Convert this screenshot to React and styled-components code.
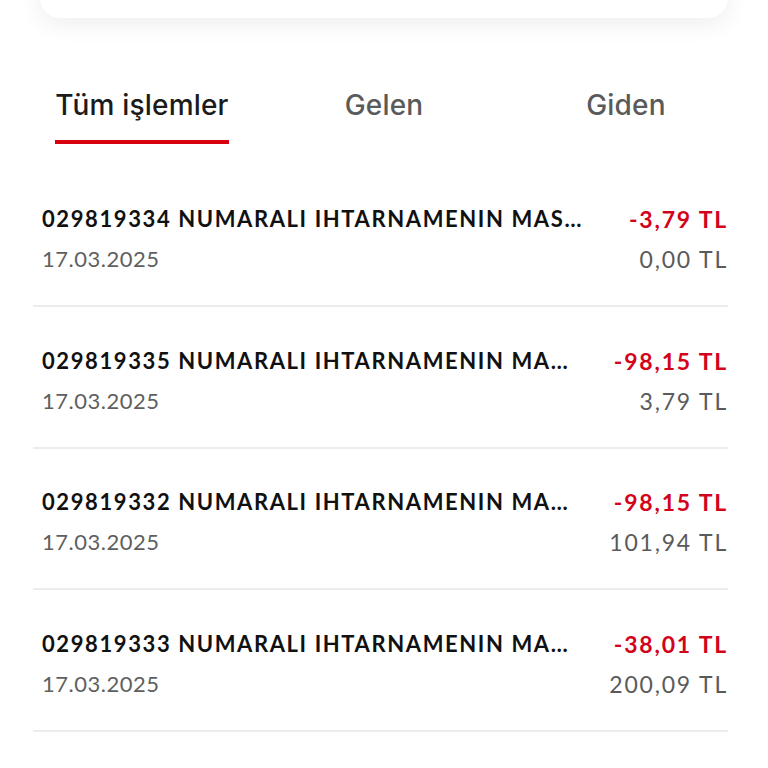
import React from "react";
import styled, { createGlobalStyle } from "styled-components";

const GlobalStyle = createGlobalStyle`
  body {
    margin: 0;
    background: #fff;
    font-family: "Lato", "Noto Sans", sans-serif;
  }
`;

const Page = styled.div`
  width: 768px;
  height: 768px;
  overflow: hidden;
  background: #fff;
`;

const TopCard = styled.div`
  margin: -42px 40px 0;
  height: 60px;
  background: #fff;
  border-radius: 20px;
  box-shadow: 0 6px 24px rgba(0, 0, 0, 0.07);
`;

const Tabs = styled.div`
  display: grid;
  grid-template-columns: repeat(3, 1fr);
  padding: 0 21px;
  margin-top: 71px;
`;

const Tab = styled.div`
  display: flex;
  justify-content: center;
`;

const TabLabel = styled.div`
  font-family: "Inter", "Liberation Sans", sans-serif;
  font-size: 28px;
  line-height: 32px;
  font-weight: 500;
  letter-spacing: 0.2px;
  color: ${p => (p.active ? "#1b1b1b" : "#5a5a5a")};
  padding-bottom: 19px;
  border-bottom: 4px solid ${p => (p.active ? "#d6000f" : "transparent")};
`;

const List = styled.div`
  margin: 22px 40px 0 33px;
`;

const Row = styled.div`
  padding: 38px 0 31px 9px;
  border-bottom: 2px solid #ececec;
  display: flex;
  flex-direction: column;
  gap: 10px;
  & + & {
    padding-top: 38.5px;
  }
`;

const Line = styled.div`
  display: flex;
  align-items: center;
  gap: 40px;
  height: 30px;
  line-height: 30px;
`;

const Title = styled.div`
  flex: 1;
  min-width: 0;
  white-space: nowrap;
  overflow: hidden;
  text-overflow: ellipsis;
  font-size: 22px;
  font-weight: 700;
  letter-spacing: 1.6px;
  color: #111;
`;

const Date = styled.div`
  flex: 1;
  font-size: 22px;
  letter-spacing: 0.5px;
  color: #5f5f5f;
`;

const Amount = styled.div`
  flex-shrink: 0;
  white-space: nowrap;
  font-size: 23px;
  letter-spacing: 1.8px;
  font-weight: ${p => (p.main ? 700 : 400)};
  color: ${p => (p.main ? "#d2041b" : "#5a5a5a")};
`;

const rows = [
  { title: "029819334 NUMARALI IHTARNAMENIN MASRAF TAHSILATI", date: "17.03.2025", amount: "-3,79 TL", balance: "0,00 TL" },
  { title: "029819335 NUMARALI IHTARNAMENIN MASRAF TAHSILATI", date: "17.03.2025", amount: "-98,15 TL", balance: "3,79 TL" },
  { title: "029819332 NUMARALI IHTARNAMENIN MASRAF TAHSILATI", date: "17.03.2025", amount: "-98,15 TL", balance: "101,94 TL" },
  { title: "029819333 NUMARALI IHTARNAMENIN MASRAF TAHSILATI", date: "17.03.2025", amount: "-38,01 TL", balance: "200,09 TL" },
];

export default function App() {
  return (
    <Page>
      <GlobalStyle />
      <TopCard />
      <Tabs>
        <Tab><TabLabel active>Tüm işlemler</TabLabel></Tab>
        <Tab><TabLabel>Gelen</TabLabel></Tab>
        <Tab><TabLabel>Giden</TabLabel></Tab>
      </Tabs>
      <List>
        {rows.map(r => (
          <Row key={r.title + r.amount}>
            <Line>
              <Title>{r.title}</Title>
              <Amount main>{r.amount}</Amount>
            </Line>
            <Line>
              <Date>{r.date}</Date>
              <Amount>{r.balance}</Amount>
            </Line>
          </Row>
        ))}
        <Row />
      </List>
    </Page>
  );
}
